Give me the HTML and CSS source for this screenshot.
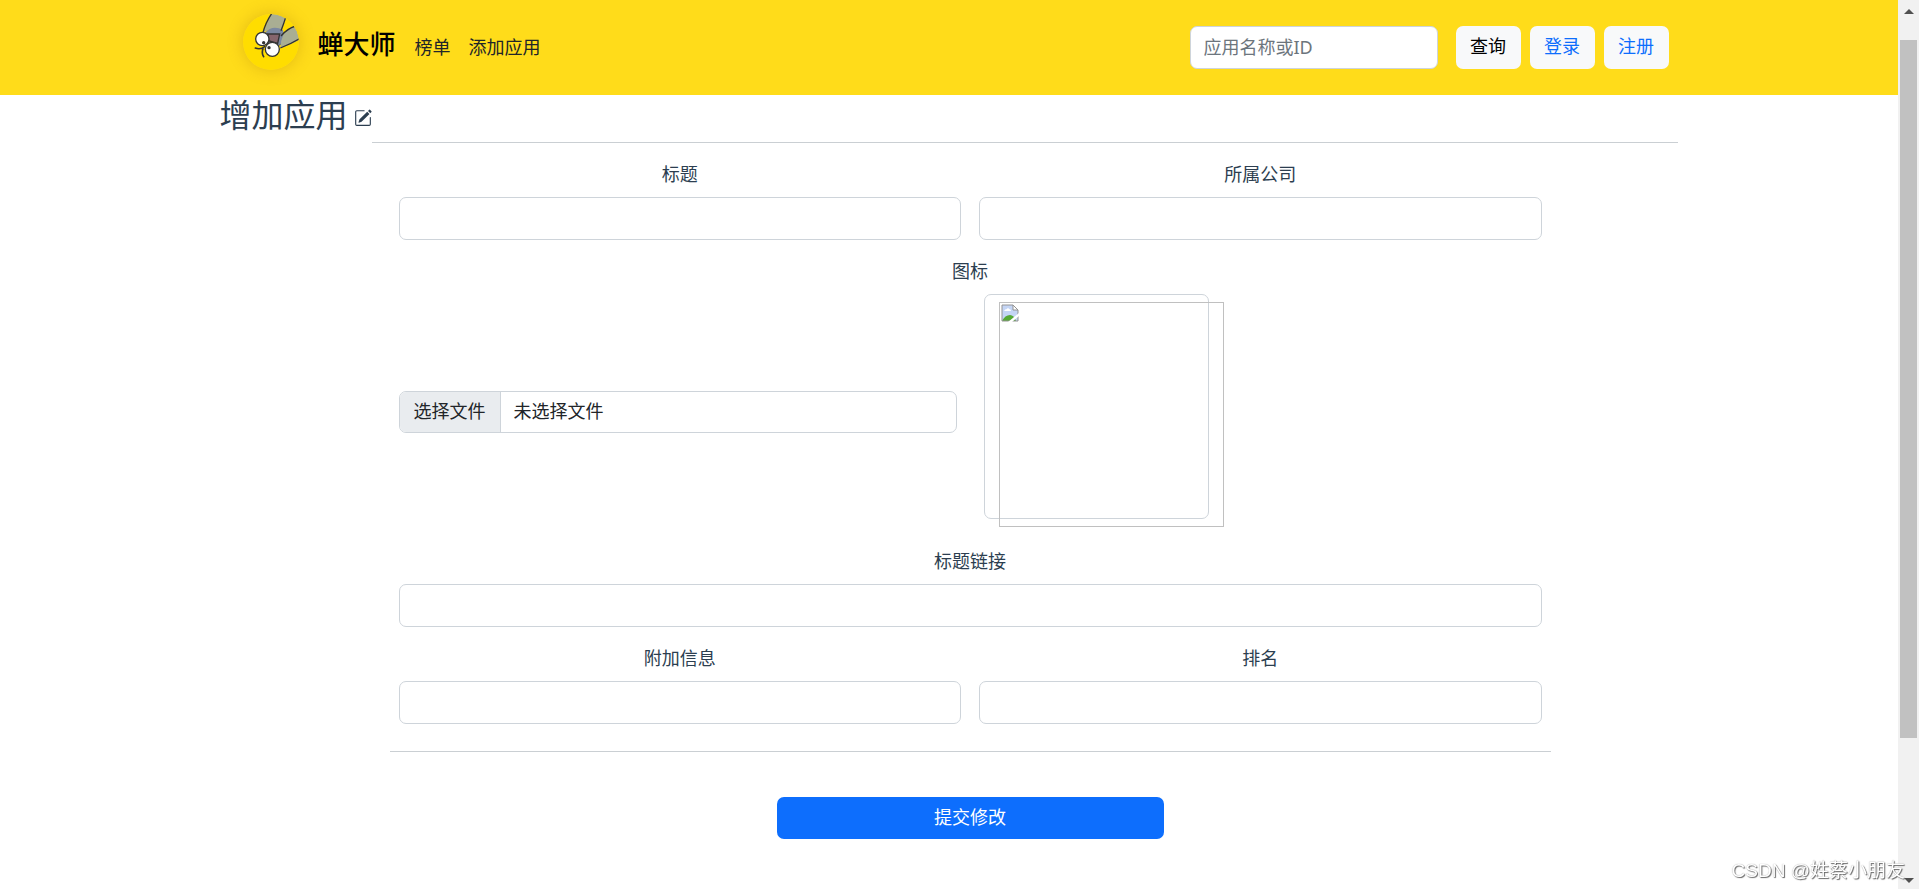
FILE: index.html
```html
<!DOCTYPE html>
<html lang="zh-CN">
<head>
    <meta charset="UTF-8">
    <meta name="viewport" content="width=device-width, initial-scale=1.0">
    <title>增加应用</title>
    <link rel="stylesheet" href="styles.css">
</head>
<body>
    <div class="page">
        <header class="header">
            <nav class="container navbar">
                <svg class="logo" viewBox="0 0 168 168" aria-hidden="true">
                    <defs>
                        <clipPath id="logo-clip"><circle cx="84" cy="84" r="84"/></clipPath>
                    </defs>
                    <g clip-path="url(#logo-clip)">
                        <rect width="168" height="168" fill="#ffdd00"/>
                        <circle cx="96" cy="70" r="27" fill="#7b88a0" stroke="#55627c" stroke-width="3"/>
                        <path d="M60 56 L84 0 L92 -8 L136 -8 L116 50 Q90 36 60 56Z" fill="#a9ae93"/>
                        <path d="M112 102 L117 62 Q140 42 158 36 L176 74 Q140 94 112 102Z" fill="#a9ae93"/>
                        <path d="M66 56 Q88 32 120 48 Q126 64 108 90Z" fill="#7b88a0"/>
                        <path d="M60 56 Q68 24 88 -4 M130 4 Q122 30 114 50 M114 66 Q132 44 158 36 M112 102 Q144 90 170 74" fill="none" stroke="#333" stroke-width="4"/>
                        <path d="M74 60 L110 60 L104 88 L76 80Z" fill="#85656c" stroke="#333" stroke-width="4"/>
                        <circle cx="58" cy="75" r="20" fill="#fff" stroke="#333" stroke-width="4"/>
                        <circle cx="88" cy="106" r="21" fill="#fff" stroke="#333" stroke-width="4"/>
                        <circle cx="62" cy="86" r="5" fill="#333"/>
                        <circle cx="78" cy="101" r="5" fill="#333"/>
                        <path d="M37 102 Q52 108 65 98 M60 104 Q55 118 62 128" fill="none" stroke="#333" stroke-width="5" stroke-linecap="round"/>
                    </g>
                </svg>
                <a class="brand" href="#">蝉大师</a>
                <a class="nav-link" href="#">榜单</a>
                <a class="nav-link" href="#">添加应用</a>
                <form class="search">
                    <input class="form-control search-input" type="text" placeholder="应用名称或ID" aria-label="应用名称或ID">
                    <button class="btn btn-light" type="button">查询</button>
                    <a class="btn btn-light btn-link" href="#">登录</a>
                    <a class="btn btn-light btn-link" href="#">注册</a>
                </form>
            </nav>
        </header>

        <main class="container">
            <div class="title-row">
                <h2 class="title">增加应用</h2>
                <svg class="edit-icon" viewBox="0 0 16 16" aria-hidden="true">
                    <path d="M15.502 1.94a.5.5 0 0 1 0 .706L14.459 3.69l-2-2L13.502.646a.5.5 0 0 1 .707 0l1.293 1.293zm-1.75 2.456-2-2L4.939 9.21a.5.5 0 0 0-.121.196l-.805 2.414a.25.25 0 0 0 .316.316l2.414-.805a.5.5 0 0 0 .196-.12l6.813-6.814z"/>
                    <path fill-rule="evenodd" d="M1 13.5A1.5 1.5 0 0 0 2.5 15h11a1.5 1.5 0 0 0 1.5-1.5v-6a.5.5 0 0 0-1 0v6a.5.5 0 0 1-.5.5h-11a.5.5 0 0 1-.5-.5v-11a.5.5 0 0 1 .5-.5H9a.5.5 0 0 0 0-1H2.5A1.5 1.5 0 0 0 1 2.5v11z"/>
                </svg>
                <hr class="line title-line">
            </div>

            <form class="app-form">
                <div class="fields">
                    <div class="field">
                        <label for="title">标题</label>
                        <input class="form-control" type="text" id="title">
                    </div>
                    <div class="field">
                        <label for="company">所属公司</label>
                        <input class="form-control" type="text" id="company">
                    </div>
                    <div class="field wide">
                        <label for="icon">图标</label>
                        <div class="upload">
                            <div class="upload-col">
                                <input class="file-input" type="file" id="icon">
                                <label class="file-control" for="icon">
                                    <span class="file-button">选择文件</span>
                                    <span class="file-name">未选择文件</span>
                                </label>
                            </div>
                            <div class="upload-col">
                                <div class="preview">
                                    <div class="preview-img">
                                        <svg class="broken-icon" viewBox="0 0 18 18" aria-hidden="true">
                                            <path d="M1 1H12L17 6V17H1Z" fill="#c4d5f5"/>
                                            <path d="M3 7Q4 5 6 5Q7 3 8 5Q10 5 10 7Z" fill="#fff"/>
                                            <path d="M1 17Q4 11 9 11Q13 11 15 17Z" fill="#56aa35"/>
                                            <path d="M12 1V6H17Z" fill="#fff"/>
                                            <path d="M1 17V1H12L17 6V17ZM12 1V6H17" fill="none" stroke="#939393"/>
                                            <path d="M18 9V12L11 18H7Z" fill="#fff"/>
                                        </svg>
                                    </div>
                                </div>
                            </div>
                        </div>
                    </div>
                    <div class="field wide">
                        <label for="link">标题链接</label>
                        <input class="form-control" type="text" id="link">
                    </div>
                    <div class="field">
                        <label for="info">附加信息</label>
                        <input class="form-control" type="text" id="info">
                    </div>
                    <div class="field">
                        <label for="rank">排名</label>
                        <input class="form-control" type="text" id="rank">
                    </div>
                </div>
                <hr class="line">
                <button class="btn btn-primary" type="button">提交修改</button>
            </form>
        </main>
    </div>

    <div class="scrollbar" aria-hidden="true">
        <svg class="arrow" viewBox="0 0 10 5"><path d="M0 5L5 0L10 5Z"/></svg>
        <div class="track"><div class="thumb"></div></div>
        <svg class="arrow" viewBox="0 0 10 5"><path d="M0 0L5 5L10 0Z"/></svg>
    </div>
    <div class="watermark">CSDN @姓蔡小朋友</div>
</body>
</html>
```

FILE: styles.css
```css
* {
    box-sizing: border-box;
}

body {
    margin: 0;
    display: flex;
    min-height: 100vh;
    background-color: #fff;
    color: #2c3e50;
    font-family: "Noto Sans", "Noto Sans CJK SC", sans-serif;
    font-size: 18px;
    line-height: 27px;
}

.page {
    flex: 1;
    min-width: 0;
}

.container {
    max-width: 1485px;
    margin: 0 auto;
    padding: 0 14px 0 13px;
}

/* header */
.header {
    background-color: #ffdc1a;
}

.navbar {
    display: flex;
    align-items: center;
    height: 95px;
    padding: 0 23px 0 36px;
}

.logo {
    width: 56px;
    height: 56px;
    margin-bottom: 11px;
    border-radius: 50%;
    box-shadow: 0 0 16px rgba(160, 110, 0, 0.3);
}

.brand {
    margin: 0 19px;
    color: #000;
    font-size: 26px;
    font-weight: 500;
    line-height: 36px;
    text-decoration: none;
    padding-bottom: 8px;
}

.nav-link {
    margin-right: 18px;
    color: #212529;
    text-decoration: none;
}

.search {
    display: flex;
    gap: 9px;
    margin-left: auto;
}

.form-control {
    width: 100%;
    height: 43px;
    padding: 6px 13px 8px;
    border: 1px solid #ced4da;
    border-radius: 7px;
    background-color: #fff;
    color: #212529;
    font: inherit;
}

.form-control::placeholder {
    color: #6c757d;
    opacity: 1;
}

.search-input {
    width: 248px;
    margin-right: 9px;
}

.btn {
    min-width: 65px;
    height: 43px;
    padding: 6px 13px 8px;
    border: 1px solid transparent;
    border-radius: 7px;
    font: inherit;
    text-align: center;
    text-decoration: none;
    cursor: pointer;
}

.btn-light {
    background-color: #f8f9fa;
    color: #000;
}

.btn-link {
    color: #0d6efd;
}

.btn-primary {
    display: block;
    width: 387px;
    max-width: 100%;
    height: 42px;
    margin: 45px auto 0;
    background-color: #0d6efd;
    color: #fff;
}

/* title */
.title-row {
    display: flex;
    align-items: flex-end;
    height: 48px;
}

.title {
    margin: 0 6px 9px 0;
    font-size: 32px;
    font-weight: 400;
    line-height: 38px;
}

.edit-icon {
    width: 18px;
    height: 18px;
    margin-bottom: 16px;
    fill: #2c3e50;
}

.line {
    height: 1px;
    margin: 27px 0 0;
    border: 0;
    background-color: #cacfd3;
}

.title-line {
    flex: 1;
    margin: 0;
}

/* form */
.app-form {
    margin: 18px 127px 0 170px;
}

.fields {
    display: grid;
    grid-template-columns: 1fr 1fr;
    gap: 18px;
    padding: 0 9px;
}

.field {
    display: flex;
    flex-direction: column;
    gap: 9px;
    text-align: center;
}

.wide {
    grid-column: span 2;
}

.upload {
    display: grid;
    grid-template-columns: 1fr 1fr;
    align-items: center;
    gap: 27px;
}

.upload-col {
    position: relative;
}

.file-input {
    position: absolute;
    width: 1px;
    height: 1px;
    opacity: 0;
}

.file-control {
    display: flex;
    height: 42px;
    overflow: hidden;
    border: 1px solid #ced4da;
    border-radius: 7px;
    color: #212529;
    line-height: 38px;
    cursor: pointer;
}

.file-button {
    padding: 0 14px;
    border-right: 1px solid #ced4da;
    background-color: #e9ecef;
}

.file-name {
    padding: 0 13px;
}

/* the picture is as wide as its frame, so the padding pushes it over the edge */
.preview {
    width: 225px;
    height: 225px;
    margin-bottom: 11px;
    padding: 7px 14px;
    border: 1px solid #ced4da;
    border-radius: 7px;
}

.preview-img {
    display: flex;
    width: 225px;
    height: 225px;
    padding: 1px;
    border: 1px solid #c0c0c0;
}

.broken-icon {
    width: 18px;
    height: 18px;
}

/* scrollbar */
.scrollbar {
    position: sticky;
    top: 0;
    display: flex;
    flex-direction: column;
    align-items: center;
    width: 21px;
    height: 100vh;
    padding: 9px 0 6px;
    background-color: #f1f1f1;
}

.arrow {
    width: 10px;
    height: 5px;
    fill: #505050;
}

.track {
    flex: 1;
    padding: 26px 0;
}

.thumb {
    width: 17px;
    height: 86%;
    background-color: #c1c1c1;
}

.watermark {
    position: fixed;
    right: 14px;
    bottom: 5px;
    color: #fff;
    font-family: "Liberation Sans", "Noto Sans CJK SC", sans-serif;
    font-size: 19px;
    text-shadow: 1px 1px 1px #666, 0 0 1px #999;
}
```
